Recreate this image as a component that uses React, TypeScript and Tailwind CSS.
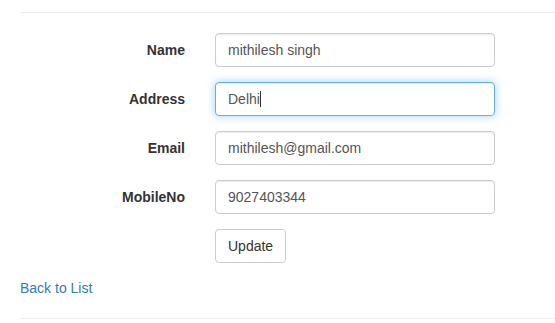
import React from 'react'

const FIELDS = [
  { label: 'Name', value: 'mithilesh singh' },
  { label: 'Address', value: 'Delhi', focused: true },
  { label: 'Email', value: 'mithilesh@gmail.com' },
  { label: 'MobileNo', value: '9027403344' },
]

export default function App() {
  return (
    <div className="min-h-[323px] bg-white px-5 text-[14px] leading-[20px] text-[#333]" style={{ fontFamily: '"Liberation Sans", Arial, sans-serif' }}>
      <hr className="mt-[12px] mb-[20px] border-t border-[#eee] mr-[-20px]" />
      <form onSubmit={(e) => e.preventDefault()}>
        {FIELDS.map((f) => (
          <div key={f.label} className="mb-[15px] flex">
            <label className="w-[165px] shrink-0 pt-[7px] text-right font-bold">{f.label}</label>
            <div className="relative ml-[30px] w-[280px]">
              <input
                readOnly
                defaultValue={f.value}
                className={
                  f.focused
                    ? 'block h-[34px] w-full rounded-[4px] border border-[#66afe9] bg-white px-3 py-[6px] text-[#555] shadow-[inset_0_1px_1px_rgba(0,0,0,0.075),0_0_8px_rgba(102,175,233,0.6)] outline-none'
                    : 'block h-[34px] w-full rounded-[4px] border border-[#ccc] bg-white px-3 py-[6px] text-[#555] shadow-[inset_0_1px_1px_rgba(0,0,0,0.075)] outline-none'
                }
              />
              {f.focused && (
                <div className="pointer-events-none absolute inset-0 flex items-center px-[13px]">
                  <span className="text-transparent">{f.value}</span>
                  <span className="h-[16px] w-px bg-[#333]" />
                </div>
              )}
            </div>
          </div>
        ))}
        <div className="mb-[15px] pl-[195px]">
          <button type="submit" className="h-[34px] rounded-[4px] border border-[#ccc] bg-white px-3 text-[#333]">
            Update
          </button>
        </div>
      </form>
      <div>
        <a href="#" className="text-[#337ab7]">Back to List</a>
      </div>
      <hr className="mt-[20px] border-t border-[#eee] mr-[-20px]" />
    </div>
  )
}
